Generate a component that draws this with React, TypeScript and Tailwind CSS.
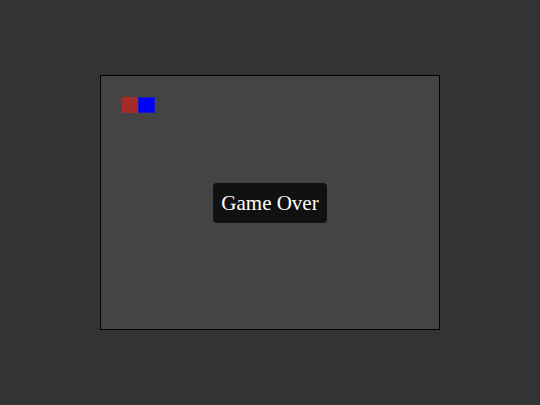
export default function App() {
  return (
    <div className="flex h-[405px] w-[540px] items-center justify-center bg-[#333333]">
      <div className="relative flex h-[255px] w-[340px] items-center justify-center border border-black bg-[#444444]">
        {/* snake */}
        <div className="absolute left-[21px] top-[21px] h-4 w-4 bg-[#a52a2a]" />
        <div className="absolute left-[37px] top-[21px] h-4 w-[17px] border border-[#1a1acc] bg-[#0000ff]" />
        <div
          className="rounded bg-[#111111] px-2 py-2 text-[21px] leading-[24px] text-white"
          style={{ fontFamily: '"Liberation Serif", serif' }}
        >
          Game Over
        </div>
      </div>
    </div>
  );
}
